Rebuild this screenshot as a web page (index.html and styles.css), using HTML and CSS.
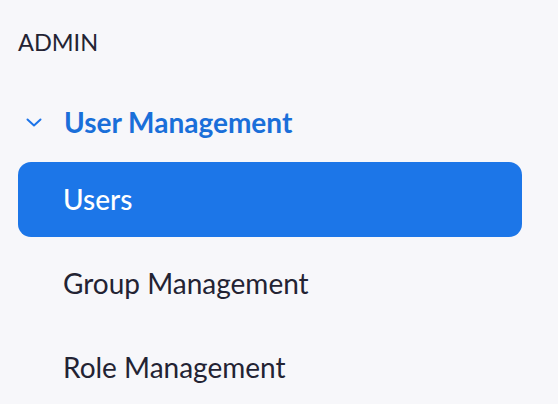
FILE: index.html
```html
<!DOCTYPE html>
<html lang="en">
<head>
    <meta charset="UTF-8">
    <meta name="viewport" content="width=device-width, initial-scale=1.0">
    <title>Admin</title>
    <link rel="stylesheet" href="styles.css">
</head>
<body>
    <nav class="sidebar">
        <div class="sidebar-heading">ADMIN</div>
        <div class="menu-group">
            <button class="menu-toggle" type="button">
                <svg class="chevron" width="16" height="9" viewBox="0 0 16 9">
                    <path d="M1.5 1.5 L8 7.5 L14.5 1.5" fill="none" stroke="currentColor" stroke-width="2" stroke-linecap="round" stroke-linejoin="round"/>
                </svg>
                <span>User Management</span>
            </button>
            <ul class="menu-list">
                <li><a href="#users" class="menu-item active">Users</a></li>
                <li><a href="#groups" class="menu-item">Group Management</a></li>
                <li><a href="#roles" class="menu-item">Role Management</a></li>
            </ul>
        </div>
    </nav>
</body>
</html>
```

FILE: styles.css
```css
body {
    margin: 0;
    background-color: #f7f7fa;
    font-family: Lato, "Open Sans", sans-serif;
    color: #232333;
}

.sidebar {
    padding: 30px 36px 0 18px;
}

.sidebar-heading {
    font-size: 23.5px;
    line-height: 24px;
}

.menu-group {
    margin-top: 48px;
}

.menu-toggle {
    display: flex;
    align-items: center;
    gap: 22px;
    width: 100%;
    height: 40px;
    padding: 0 0 0 8px;
    border: none;
    background: none;
    font-family: inherit;
    font-size: 28px;
    font-weight: bold;
    color: #1a6fd9;
    cursor: pointer;
}

.chevron {
    display: block;
    color: #1c74e9;
}

.menu-list {
    list-style: none;
    margin: 20px 0 0;
    padding: 0;
    display: flex;
    flex-direction: column;
    gap: 9px;
}

.menu-item {
    display: block;
    height: 75px;
    line-height: 75px;
    padding-left: 45px;
    border-radius: 13px;
    font-size: 28px;
    color: #232333;
    text-decoration: none;
}

.menu-item.active {
    background-color: #1c76e8;
    color: white;
    font-weight: 500;
}
```
